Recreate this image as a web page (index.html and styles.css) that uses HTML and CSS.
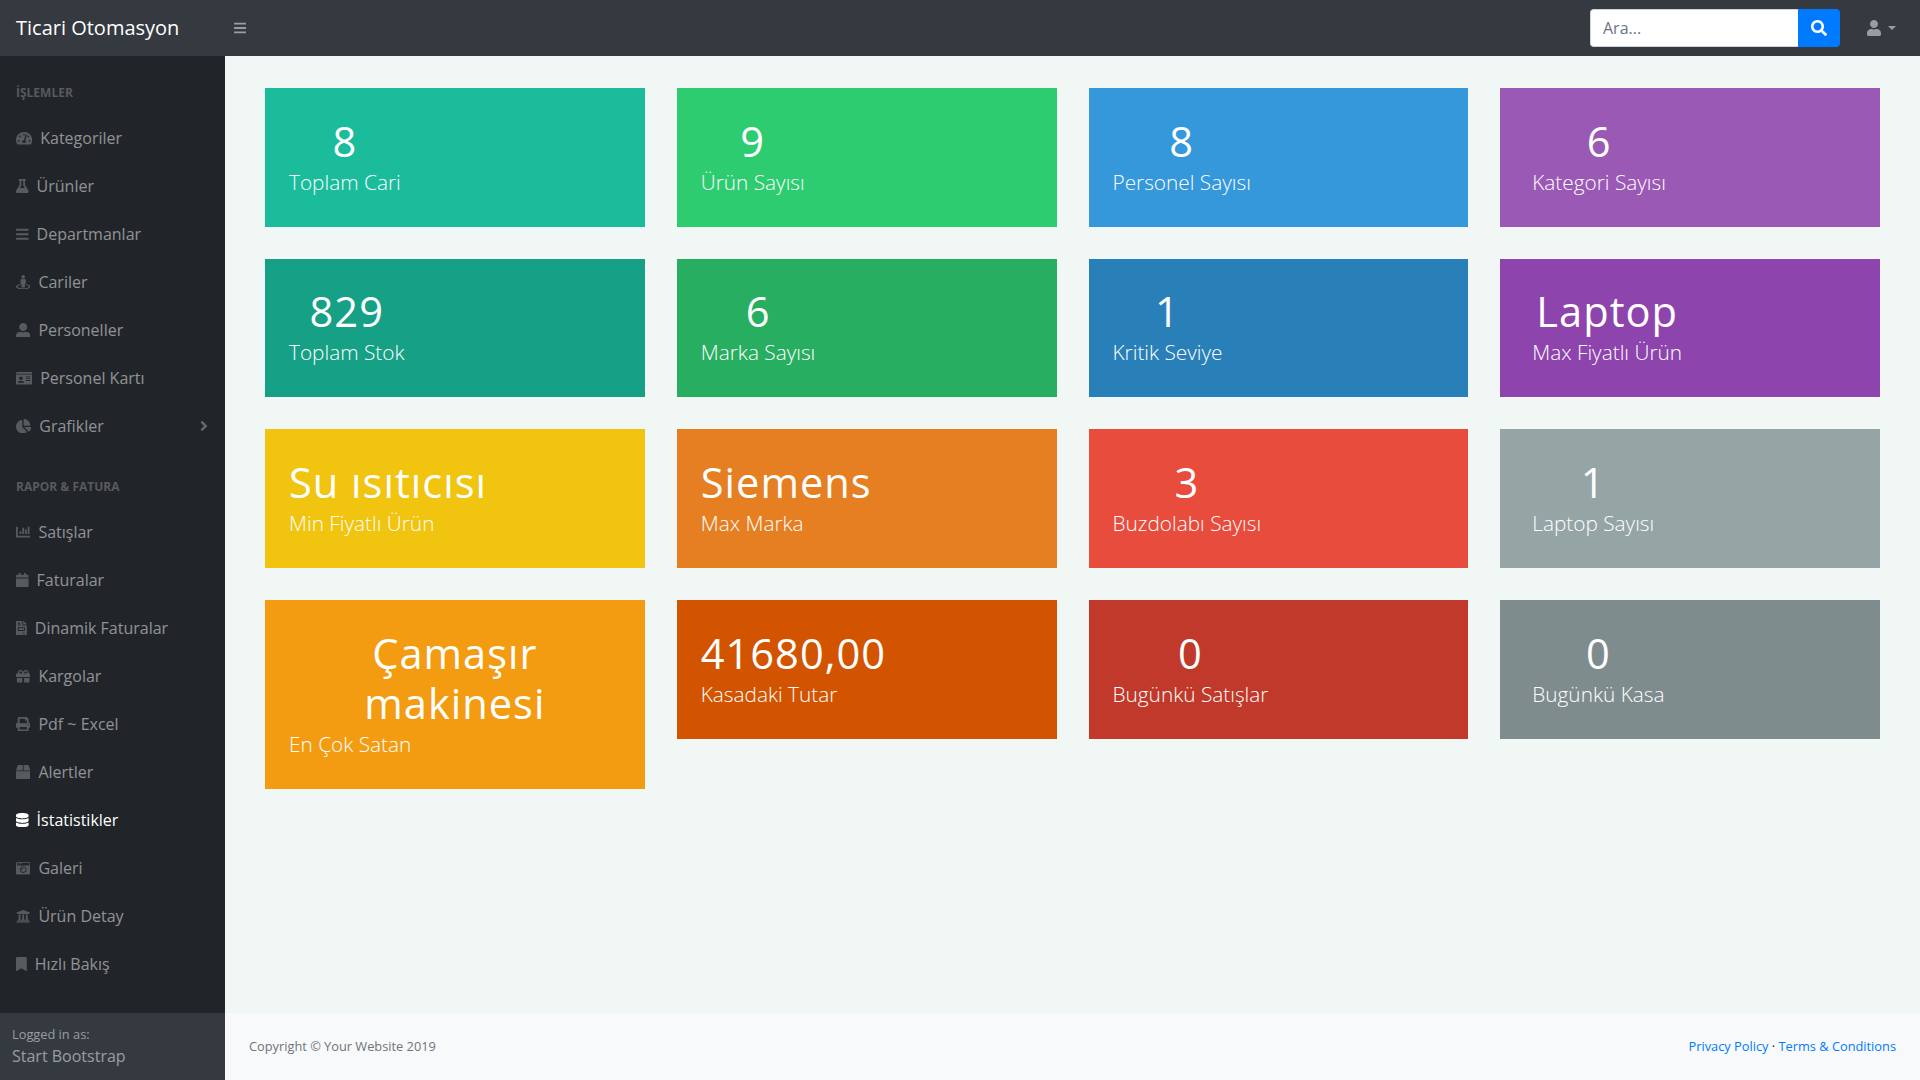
FILE: index.html
```html
<!DOCTYPE html>
<html lang="tr">
<head>
<meta charset="utf-8">
<title>Ticari Otomasyon</title>
<link rel="stylesheet" href="styles.css">
</head>
<body>
<header class="topnav">
  <a class="brand">Ticari Otomasyon</a>
  <button class="toggle" aria-label="Menü"><svg class="icon" viewBox="0 0 448 512"><path d="M16 132h416c8.837 0 16-7.163 16-16V76c0-8.837-7.163-16-16-16H16C7.163 60 0 67.163 0 76v40c0 8.837 7.163 16 16 16zm0 160h416c8.837 0 16-7.163 16-16v-40c0-8.837-7.163-16-16-16H16c-8.837 0-16 7.163-16 16v40c0 8.837 7.163 16 16 16zm0 160h416c8.837 0 16-7.163 16-16v-40c0-8.837-7.163-16-16-16H16c-8.837 0-16 7.163-16 16v40c0 8.837 7.163 16 16 16z"/></svg></button>
  <form class="search">
    <input class="search-input" type="text" placeholder="Ara...">
    <button class="search-button" type="button" aria-label="Ara"><svg class="icon" viewBox="0 0 512 512"><path d="M505 442.7L405.3 343c-4.5-4.5-10.6-7-17-7H372c27.6-35.3 44-79.7 44-128C416 93.1 322.9 0 208 0S0 93.1 0 208s93.1 208 208 208c48.3 0 92.7-16.4 128-44v16.3c0 6.4 2.5 12.5 7 17l99.7 99.7c9.4 9.4 24.6 9.4 33.9 0l28.3-28.3c9.4-9.4 9.4-24.6.1-34zM208 336c-70.7 0-128-57.2-128-128 0-70.7 57.2-128 128-128 70.7 0 128 57.2 128 128 0 70.7-57.2 128-128 128z"/></svg></button>
  </form>
  <a class="user"><svg class="icon" viewBox="0 0 448 512"><path d="M224 256c70.7 0 128-57.3 128-128S294.7 0 224 0 96 57.3 96 128s57.3 128 128 128zm89.6 32h-16.7c-22.2 10.2-46.9 16-72.9 16s-50.6-5.8-72.9-16h-16.7C60.2 288 0 348.2 0 422.4V464c0 26.5 21.5 48 48 48h352c26.5 0 48-21.5 48-48v-41.6c0-74.2-60.2-134.4-134.4-134.4z"/></svg><span class="caret"></span></a>
</header>
<div class="layout">
  <aside class="sidebar">
    <nav class="menu">
      <div class="heading">İŞLEMLER</div>
      <a class="link"><svg class="icon" viewBox="0 0 576 512"><path d="M288 32C128.94 32 0 160.94 0 320c0 52.8 14.25 102.26 39.06 144.8 5.61 9.62 16.3 15.2 27.44 15.2h443c11.14 0 21.83-5.58 27.44-15.2C561.75 422.26 576 372.8 576 320c0-159.06-128.94-288-288-288zm0 64c14.71 0 26.58 10.13 30.32 23.65-1.11 2.26-2.64 4.23-3.45 6.67l-9.22 27.67c-5.13 3.49-10.97 6.01-17.64 6.01-17.67 0-32-14.33-32-32S270.33 96 288 96zM96 384c-17.67 0-32-14.33-32-32s14.33-32 32-32 32 14.33 32 32-14.33 32-32 32zm48-160c-17.67 0-32-14.33-32-32s14.33-32 32-32 32 14.33 32 32-14.33 32-32 32zm246.77-72.41l-61.33 184C343.13 347.33 352 364.54 352 384c0 11.72-3.38 22.55-8.88 32H232.88c-5.5-9.45-8.88-20.28-8.88-32 0-33.94 26.5-61.43 59.9-63.59l61.34-184.01c4.17-12.56 17.73-19.45 30.36-15.17 12.57 4.19 19.35 17.79 15.17 30.36zm14.66 57.2l15.52-46.55c3.47-1.29 7.13-2.23 11.05-2.23 17.67 0 32 14.33 32 32s-14.33 32-32 32c-11.38-.01-20.89-6.28-26.57-15.22zM480 384c-17.67 0-32-14.33-32-32s14.33-32 32-32 32 14.33 32 32-14.33 32-32 32z"/></svg>Kategoriler</a>
      <a class="link"><svg class="icon" viewBox="0 0 448 512"><path d="M437.2 403.5L320 215V64h8c13.3 0 24-10.7 24-24V24c0-13.3-10.7-24-24-24H120c-13.3 0-24 10.7-24 24v16c0 13.3 10.7 24 24 24h8v151L10.8 403.5C-18.5 450.6 15.3 512 70.9 512h306.2c55.7 0 89.4-61.5 60.1-108.5zM137.9 320l48.2-77.6c3.7-5.2 5.8-11.6 5.8-18.4V64h64v160c0 6.9 2.2 13.2 5.8 18.4l48.2 77.6h-172z"/></svg>Ürünler</a>
      <a class="link"><svg class="icon" viewBox="0 0 448 512"><path d="M16 132h416c8.837 0 16-7.163 16-16V76c0-8.837-7.163-16-16-16H16C7.163 60 0 67.163 0 76v40c0 8.837 7.163 16 16 16zm0 160h416c8.837 0 16-7.163 16-16v-40c0-8.837-7.163-16-16-16H16c-8.837 0-16 7.163-16 16v40c0 8.837 7.163 16 16 16zm0 160h416c8.837 0 16-7.163 16-16v-40c0-8.837-7.163-16-16-16H16c-8.837 0-16 7.163-16 16v40c0 8.837 7.163 16 16 16z"/></svg>Departmanlar</a>
      <a class="link"><svg class="icon" viewBox="0 0 512 512"><path d="M367.9 329.76c-4.62 5.3-9.78 10.1-15.9 13.65v22.94c66.52 9.34 112 28.05 112 49.65 0 30.93-93.12 56-208 56S48 446.93 48 416c0-21.6 45.48-40.3 112-49.65v-22.94c-6.12-3.55-11.28-8.35-15.9-13.65C58.87 345.34 0 378.05 0 416c0 53.02 114.62 96 256 96s256-42.98 256-96c0-37.95-58.87-70.66-144.1-86.24zM256 128c35.35 0 64-28.65 64-64S291.35 0 256 0s-64 28.65-64 64 28.65 64 64 64zm-64 192v96c0 17.67 14.33 32 32 32h64c17.67 0 32-14.33 32-32v-96c17.67 0 32-14.33 32-32v-96c0-26.51-21.49-48-48-48h-11.8c-11.07 5.03-23.26 8-36.2 8s-25.13-2.97-36.2-8H208c-26.51 0-48 21.49-48 48v96c0 17.67 14.33 32 32 32z"/></svg>Cariler</a>
      <a class="link"><svg class="icon" viewBox="0 0 512 512"><path d="M256 288c79.5 0 144-64.5 144-144S335.5 0 256 0 112 64.5 112 144s64.5 144 144 144zm128 32h-55.1c-22.2 10.2-46.9 16-72.9 16s-50.6-5.8-72.9-16H128C57.3 320 0 377.3 0 448v16c0 26.5 21.5 48 48 48h416c26.5 0 48-21.5 48-48v-16c0-70.7-57.3-128-128-128z"/></svg>Personeller</a>
      <a class="link"><svg class="icon" viewBox="0 0 576 512"><path d="M528 32H48C21.5 32 0 53.5 0 80v16h576V80c0-26.5-21.5-48-48-48zM0 432c0 26.5 21.5 48 48 48h480c26.5 0 48-21.5 48-48V128H0v304zm352-232c0-4.4 3.6-8 8-8h144c4.4 0 8 3.6 8 8v16c0 4.4-3.6 8-8 8H360c-4.4 0-8-3.6-8-8v-16zm0 64c0-4.4 3.6-8 8-8h144c4.4 0 8 3.6 8 8v16c0 4.4-3.6 8-8 8H360c-4.4 0-8-3.6-8-8v-16zm0 64c0-4.4 3.6-8 8-8h144c4.4 0 8 3.6 8 8v16c0 4.4-3.6 8-8 8H360c-4.4 0-8-3.6-8-8v-16zM176 192c35.3 0 64 28.7 64 64s-28.7 64-64 64-64-28.7-64-64 28.7-64 64-64zM67.1 396.2C75.5 370.5 99.6 352 128 352h8.2c12.3 5.1 25.7 8 39.8 8s27.6-2.9 39.8-8h8.2c28.4 0 52.5 18.5 60.9 44.2 3.2 9.9-5.2 19.8-15.6 19.8H82.7c-10.4 0-18.8-10-15.6-19.8z"/></svg>Personel Kartı</a>
      <a class="link"><svg class="icon" viewBox="0 0 544 512"><path d="M527.79 288H290.5l158.03 158.03c6.04 6.04 15.98 6.53 22.19.68 38.7-36.46 65.32-85.61 73.13-140.86 1.34-9.46-6.51-17.85-16.06-17.85zm-15.83-64.8C503.72 103.74 408.26 8.28 288.8.04 279.68-.59 272 7.1 272 16.24V240h223.77c9.14 0 16.82-7.68 16.19-16.8zM224 288V50.71c0-9.55-8.39-17.4-17.84-16.06C86.99 51.49-4.1 155.6.14 280.37 4.5 408.51 114.83 513.59 243.03 511.98c50.4-.63 96.97-16.87 135.26-44.03 7.9-5.6 8.42-17.23 1.57-24.08L224 288z"/></svg>Grafikler<svg class="arrow" viewBox="0 0 512 512"><path transform="translate(128)" d="M224.3 273l-136 136c-9.4 9.4-24.6 9.4-33.9 0l-22.6-22.6c-9.4-9.4-9.4-24.6 0-33.9l96.4-96.4-96.4-96.4c-9.4-9.4-9.4-24.6 0-33.9L54.3 103c9.4-9.4 24.6-9.4 33.9 0l136 136c9.5 9.4 9.5 24.6.1 34z"/></svg></a>
      <div class="heading">RAPOR &amp; FATURA</div>
      <a class="link"><svg class="icon" viewBox="0 0 512 512"><path d="M332.8 320h38.4c6.4 0 12.8-6.4 12.8-12.8V172.8c0-6.4-6.4-12.8-12.8-12.8h-38.4c-6.4 0-12.8 6.4-12.8 12.8v134.4c0 6.4 6.4 12.8 12.8 12.8zm96 0h38.4c6.4 0 12.8-6.4 12.8-12.8V76.8c0-6.4-6.4-12.8-12.8-12.8h-38.4c-6.4 0-12.8 6.4-12.8 12.8v230.4c0 6.4 6.4 12.8 12.8 12.8zm-288 0h38.4c6.4 0 12.8-6.4 12.8-12.8v-70.4c0-6.4-6.4-12.8-12.8-12.8h-38.4c-6.4 0-12.8 6.4-12.8 12.8v70.4c0 6.4 6.4 12.8 12.8 12.8zm96 0h38.4c6.4 0 12.8-6.4 12.8-12.8V108.8c0-6.4-6.4-12.8-12.8-12.8h-38.4c-6.4 0-12.8 6.4-12.8 12.8v198.4c0 6.4 6.4 12.8 12.8 12.8zM496 384H64V80c0-8.84-7.16-16-16-16H16C7.16 64 0 71.16 0 80v336c0 17.67 14.33 32 32 32h464c8.84 0 16-7.16 16-16v-32c0-8.84-7.16-16-16-16z"/></svg>Satışlar</a>
      <a class="link"><svg class="icon" viewBox="0 0 448 512"><path d="M12 192h424c6.6 0 12 5.4 12 12v260c0 26.5-21.5 48-48 48H48c-26.5 0-48-21.5-48-48V204c0-6.6 5.4-12 12-12zm436-44v-36c0-26.5-21.5-48-48-48h-48V12c0-6.6-5.4-12-12-12h-40c-6.6 0-12 5.4-12 12v52H160V12c0-6.6-5.4-12-12-12h-40c-6.6 0-12 5.4-12 12v52H48C21.5 64 0 85.5 0 112v36c0 6.6 5.4 12 12 12h424c6.6 0 12-5.4 12-12z"/></svg>Faturalar</a>
      <a class="link"><svg class="icon" viewBox="0 0 384 512"><path d="M288 256H96v64h192v-64zm89-151L279.1 7c-4.5-4.5-10.6-7-17-7H256v128h128v-6.1c0-6.3-2.5-12.4-7-16.9zm-153 31V0H24C10.7 0 0 10.7 0 24v464c0 13.3 10.7 24 24 24h336c13.3 0 24-10.7 24-24V160H248c-13.2 0-24-10.8-24-24zM64 72c0-4.42 3.58-8 8-8h80c4.42 0 8 3.58 8 8v16c0 4.42-3.58 8-8 8H72c-4.42 0-8-3.58-8-8V72zm0 64c0-4.42 3.58-8 8-8h80c4.42 0 8 3.58 8 8v16c0 4.42-3.58 8-8 8H72c-4.42 0-8-3.58-8-8v-16zm256 304c0 4.42-3.58 8-8 8h-80c-4.42 0-8-3.58-8-8v-16c0-4.42 3.58-8 8-8h80c4.42 0 8 3.58 8 8v16zm0-200v96c0 8.84-7.16 16-16 16H80c-8.84 0-16-7.16-16-16v-96c0-8.84 7.16-16 16-16h224c8.84 0 16 7.16 16 16z"/></svg>Dinamik Faturalar</a>
      <a class="link"><svg class="icon" viewBox="0 0 512 512"><path d="M32 448c0 17.7 14.3 32 32 32h160V320H32v128zm256 32h160c17.7 0 32-14.3 32-32V320H288v160zm192-320h-42.1c6.2-12.1 10.1-25.5 10.1-40 0-48.5-39.5-88-88-88-41.6 0-68.5 21.3-103 68.3-34.5-47-61.4-68.3-103-68.3-48.5 0-88 39.5-88 88 0 14.5 3.8 27.9 10.1 40H32c-17.7 0-32 14.3-32 32v80c0 8.8 7.2 16 16 16h480c8.8 0 16-7.2 16-16v-80c0-17.7-14.3-32-32-32zm-326.1 0c-22.1 0-40-17.9-40-40s17.9-40 40-40c19.9 0 34.6 3.3 86.1 80h-86.1zm206.1 0h-86.1c51.4-76.5 65.7-80 86.1-80 22.1 0 40 17.9 40 40s-17.9 40-40 40z"/></svg>Kargolar</a>
      <a class="link"><svg class="icon" viewBox="0 0 512 512"><path d="M448 192V77.25c0-8.49-3.37-16.62-9.37-22.63L393.37 9.37c-6-6-14.14-9.37-22.63-9.37H96C78.33 0 64 14.33 64 32v160c-35.35 0-64 28.65-64 64v112c0 8.84 7.16 16 16 16h48v96c0 17.67 14.33 32 32 32h320c17.67 0 32-14.33 32-32v-96h48c8.84 0 16-7.16 16-16V256c0-35.35-28.65-64-64-64zm-64 256H128v-96h256v96zm0-224H128V64h192v48c0 8.84 7.16 16 16 16h48v96zm48 72c-13.25 0-24-10.75-24-24 0-13.26 10.75-24 24-24s24 10.74 24 24c0 13.25-10.75 24-24 24z"/></svg>Pdf ~ Excel</a>
      <a class="link"><svg class="icon" viewBox="0 0 512 512"><path d="M509.5 184.6L458.9 32.8C452.4 13.2 434.1 0 413.4 0H272v192h238.7c-.4-2.5-.4-5-1.2-7.4zM240 0H98.6c-20.7 0-39 13.2-45.5 32.8L2.5 184.6c-.8 2.4-.8 4.9-1.2 7.4H240V0zM0 224v240c0 26.5 21.5 48 48 48h416c26.5 0 48-21.5 48-48V224H0z"/></svg>Alertler</a>
      <a class="link active"><svg class="icon" viewBox="0 0 448 512"><path d="M448 73.143v45.714C448 159.143 347.667 192 224 192S0 159.143 0 118.857V73.143C0 32.857 100.333 0 224 0s224 32.857 224 73.143zM448 176v102.857C448 319.143 347.667 352 224 352S0 319.143 0 278.857V176c48.125 33.143 136.208 48.572 224 48.572S399.874 209.143 448 176zm0 160v102.857C448 479.143 347.667 512 224 512S0 479.143 0 438.857V336c48.125 33.143 136.208 48.572 224 48.572S399.874 369.143 448 336z"/></svg>İstatistikler</a>
      <a class="link"><svg class="icon" viewBox="0 0 512 512"><path d="M48 32C21.5 32 0 53.5 0 80v352c0 26.5 21.5 48 48 48h416c26.5 0 48-21.5 48-48V80c0-26.5-21.5-48-48-48H48zm0 32h106c3.3 0 6 2.7 6 6v20c0 3.3-2.7 6-6 6H38c-3.3 0-6-2.7-6-6V80c0-8.8 7.2-16 16-16zm426 96H38c-3.3 0-6-2.7-6-6v-36c0-3.3 2.7-6 6-6h138l30.2-45.3c1.1-1.7 3-2.7 5-2.7H464c8.8 0 16 7.2 16 16v74c0 3.3-2.7 6-6 6zM256 424c-66.2 0-120-53.8-120-120s53.8-120 120-120 120 53.8 120 120-53.8 120-120 120zm0-208c-48.5 0-88 39.5-88 88s39.5 88 88 88 88-39.5 88-88-39.5-88-88-88zm-48 104c-8.8 0-16-7.2-16-16 0-35.3 28.7-64 64-64 8.8 0 16 7.2 16 16s-7.2 16-16 16c-17.6 0-32 14.4-32 32 0 8.8-7.2 16-16 16z"/></svg>Galeri</a>
      <a class="link"><svg class="icon" viewBox="0 0 512 512"><path d="M496 128v16a8 8 0 0 1-8 8h-24v12c0 6.627-5.373 12-12 12H60c-6.627 0-12-5.373-12-12v-12H24a8 8 0 0 1-8-8v-16a8 8 0 0 1 4.941-7.392l232-88a7.996 7.996 0 0 1 6.118 0l232 88A8 8 0 0 1 496 128zm-24 304H40c-13.255 0-24 10.745-24 24v16a8 8 0 0 0 8 8h464a8 8 0 0 0 8-8v-16c0-13.255-10.745-24-24-24zM96 192v192H60c-6.627 0-12 5.373-12 12v20h416v-20c0-6.627-5.373-12-12-12h-36V192h-64v192h-64V192h-64v192h-64V192H96z"/></svg>Ürün Detay</a>
      <a class="link"><svg class="icon" viewBox="0 0 384 512"><path d="M0 512V48C0 21.49 21.49 0 48 0h288c26.51 0 48 21.49 48 48v464L192 400 0 512z"/></svg>Hızlı Bakış</a>
    </nav>
    <div class="account">
      <div class="small">Logged in as:</div>
      Start Bootstrap
    </div>
  </aside>
  <div class="content">
    <main class="cards">
      <section class="card turquoise"><div class="stat"><h3 class="value">8</h3><p class="label">Toplam Cari</p></div></section>
      <section class="card emerald"><div class="stat"><h3 class="value">9</h3><p class="label">Ürün Sayısı</p></div></section>
      <section class="card river"><div class="stat"><h3 class="value">8</h3><p class="label">Personel Sayısı</p></div></section>
      <section class="card wide amethyst"><div class="stat"><h3 class="value">6</h3><p class="label">Kategori Sayısı</p></div></section>
      <section class="card green-sea"><div class="stat"><h3 class="value">829</h3><p class="label">Toplam Stok</p></div></section>
      <section class="card nephritis"><div class="stat"><h3 class="value">6</h3><p class="label">Marka Sayısı</p></div></section>
      <section class="card belize"><div class="stat"><h3 class="value">1</h3><p class="label">Kritik Seviye</p></div></section>
      <section class="card wide wisteria"><div class="stat"><h3 class="value">Laptop</h3><p class="label">Max Fiyatlı Ürün</p></div></section>
      <section class="card sunflower"><div class="stat"><h3 class="value">Su ısıtıcısı</h3><p class="label">Min Fiyatlı Ürün</p></div></section>
      <section class="card carrot"><div class="stat"><h3 class="value">Siemens</h3><p class="label">Max Marka</p></div></section>
      <section class="card alizarin"><div class="stat"><h3 class="value">3</h3><p class="label">Buzdolabı Sayısı</p></div></section>
      <section class="card wide concrete"><div class="stat"><h3 class="value">1</h3><p class="label">Laptop Sayısı</p></div></section>
      <section class="card orange"><div class="stat"><h3 class="value">Çamaşır makinesi</h3><p class="label">En Çok Satan</p></div></section>
      <section class="card pumpkin"><div class="stat"><h3 class="value">41680,00</h3><p class="label">Kasadaki Tutar</p></div></section>
      <section class="card pomegranate"><div class="stat"><h3 class="value">0</h3><p class="label">Bugünkü Satışlar</p></div></section>
      <section class="card wide asbestos"><div class="stat"><h3 class="value">0</h3><p class="label">Bugünkü Kasa</p></div></section>
    </main>
    <footer class="footer small">
      <div class="muted">Copyright © Your Website 2019</div>
      <div><a class="policy">Privacy Policy</a> · <a class="policy">Terms &amp; Conditions</a></div>
    </footer>
  </div>
</div>
</body>
</html>
```
FILE: styles.css
```css
* { box-sizing: border-box; }

body {
  margin: 0;
  height: 100vh;
  display: flex;
  flex-direction: column;
  overflow: hidden;
  font-family: "Open Sans", sans-serif;
  font-size: 16px;
  line-height: 1.5;
  color: #212529;
  background: #f1f7f5;
}

svg { fill: currentColor; flex: none; }
.icon { height: 1em; }
.small { font-size: 12.8px; }

/* Top bar */
.topnav {
  flex: none;
  display: flex;
  align-items: center;
  height: 56px;
  background: #343a40;
}
.brand { width: 225px; padding-left: 16px; font-size: 20px; line-height: 30px; color: #fff; }
.toggle {
  display: flex;
  padding: 4px 9px;
  border: 0;
  background: none;
  font-size: 14px;
  color: rgba(255, 255, 255, .5);
}
.search { display: flex; width: 250px; height: 38px; margin-left: auto; }
.search-input {
  flex: 1;
  min-width: 0;
  padding: 6px 12px;
  border: 1px solid #ced4da;
  border-right: 0;
  border-radius: 4px 0 0 4px;
  font: inherit;
  background: #fff;
}
.search-input::placeholder { color: #6c757d; opacity: 1; }
.search-button {
  display: flex;
  align-items: center;
  padding: 0 13px;
  border: 0;
  border-radius: 0 4px 4px 0;
  font-size: 16px;
  color: #fff;
  background: #007bff;
}
.user { display: flex; align-items: center; gap: 7px; margin: 0 24px 0 27px; color: rgba(255, 255, 255, .5); }
.caret { border: 4px solid transparent; border-top-color: currentColor; border-bottom: 0; }

/* Side menu */
.layout { flex: 1; display: flex; min-height: 0; }
.sidebar { flex: none; display: flex; flex-direction: column; width: 225px; color: rgba(255, 255, 255, .5); background: #212529; }
.menu { flex: 1; }
.heading { padding: 28px 16px 12px; font-size: 12px; font-weight: 700; color: rgba(255, 255, 255, .25); }
.link { display: flex; align-items: center; height: 48px; padding: 0 16px; }
.link .icon { margin-right: 8px; font-size: 14.4px; color: rgba(255, 255, 255, .25); }
.link.active, .link.active .icon { color: #fff; }
.arrow { height: 16px; margin-left: auto; margin-right: -3px; color: rgba(255, 255, 255, .3); }
.account { padding: 12px; background: #343a40; }

/* Statistic cards */
.content { flex: 1; display: flex; flex-direction: column; }
.cards {
  flex: 1;
  display: grid;
  grid-template-columns: repeat(4, 1fr);
  gap: 32px;
  align-content: start;
  align-items: start;
  padding: 32px 40px;
}
.card { display: flex; padding: 28.8px 24px; color: #fff; }
.wide { padding-left: 32px; }
.value { margin: 0; font-size: 41.6px; font-weight: 400; line-height: 1.2; letter-spacing: 1px; text-align: center; }
.label { margin: 0; font-size: 20.8px; font-weight: 300; line-height: 1.5; }

.turquoise { background: #1abc9c; }
.emerald { background: #2ecc71; }
.river { background: #3498db; }
.amethyst { background: #9b59b6; }
.green-sea { background: #16a085; }
.nephritis { background: #27ae60; }
.belize { background: #2980b9; }
.wisteria { background: #8e44ad; }
.sunflower { background: #f1c40f; }
.carrot { background: #e67e22; }
.alizarin { background: #e74c3c; }
.concrete { background: #95a5a6; }
.orange { background: #f39c12; }
.pumpkin { background: #d35400; }
.pomegranate { background: #c0392b; }
.asbestos { background: #7f8c8d; }

/* Footer */
.footer { display: flex; justify-content: space-between; padding: 24px; background: #f8f9fa; }
.muted { color: #6c757d; }
.policy { color: #007bff; }
```
